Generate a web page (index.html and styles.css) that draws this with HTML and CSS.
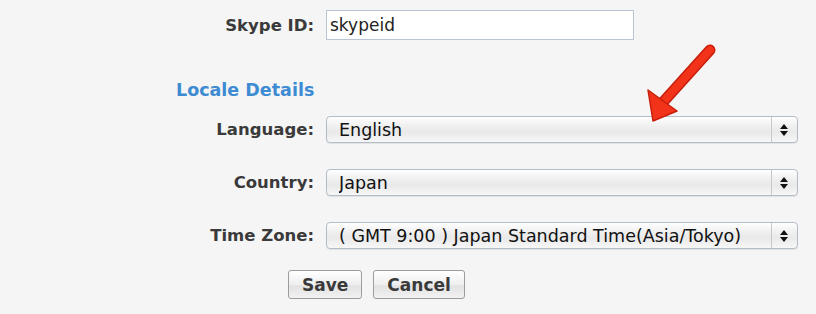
FILE: index.html
```html
<!DOCTYPE html>
<html lang="en">
<head>
    <meta charset="UTF-8">
    <meta name="viewport" content="width=device-width, initial-scale=1.0">
    <title>Profile Settings</title>
    <link rel="stylesheet" href="styles.css">
</head>
<body>

<form id="profileForm" class="profile">
    <div class="row first">
        <label for="skype">Skype ID:</label>
        <input type="text" id="skype" name="SkypeID" value="skypeid">
    </div>

    <h2 class="section">Locale Details</h2>

    <div class="row">
        <label for="language">Language:</label>
        <div class="select">
            <select id="language" name="Language">
                <option>English</option>
                <option>Japanese</option>
            </select>
            <span class="arrows"></span>
        </div>
    </div>

    <div class="row">
        <label for="country">Country:</label>
        <div class="select">
            <select id="country" name="Country">
                <option>Japan</option>
                <option>United States</option>
            </select>
            <span class="arrows"></span>
        </div>
    </div>

    <div class="row">
        <label for="timezone">Time Zone:</label>
        <div class="select">
            <select id="timezone" name="TimeZone">
                <option>( GMT 9:00 ) Japan Standard Time(Asia/Tokyo)</option>
            </select>
            <span class="arrows"></span>
        </div>
    </div>

    <div class="actions">
        <button type="button">Save</button>
        <button type="button">Cancel</button>
    </div>

    <!-- annotation arrow pointing at the language field -->
    <svg class="pointer" width="80" height="90" viewBox="0 0 80 90">
        <path d="M68 12 L22 63" stroke="#c81e0c" stroke-width="11" stroke-linecap="round" fill="none"/>
        <path d="M68 12 L22 63" stroke="#f2331a" stroke-width="8" stroke-linecap="round" fill="none"/>
        <polygon points="11,83 6,52 35,73" fill="#f2331a" stroke="#c81e0c" stroke-width="1.5" stroke-linejoin="round"/>
    </svg>
</form>

</body>
</html>
```

FILE: styles.css
```css
body { margin: 0; background: #f5f5f5; font-family: "DejaVu Sans", Verdana, sans-serif; color: #333; }
.profile { position: relative; width: 640px; padding: 10px 0 0 176px; }
.row { display: grid; grid-template-columns: 138px 472px; column-gap: 12px; align-items: center; margin-bottom: 26px; }
.row.first { grid-template-columns: 138px 308px; margin-bottom: 40px; }
label { text-align: right; font-weight: bold; font-size: 16.5px; color: #3a3a3a; }
input { height: 30px; box-sizing: border-box; border: 1px solid #b9c4d4; background: #fff; padding: 0 3px; font-family: "DejaVu Sans", Verdana, sans-serif; font-size: 17px; color: #222; }
.section { margin: 0 0 16px; font-size: 17.5px; color: #3d8bd2; height: 20px; line-height: 20px; }
.select { position: relative; height: 27px; }
select { appearance: none; -webkit-appearance: none; width: 100%; height: 27px; box-sizing: border-box; border: 1px solid #b4bcc8; border-radius: 4px; padding: 0 30px 0 12px; font-family: "DejaVu Sans", Verdana, sans-serif; font-size: 17.5px; color: #111; background: linear-gradient(#ffffff, #f0f0f0 35%, #e9e9e9 60%, #f7f7f7); box-shadow: 0 1px 1px rgba(0,0,0,0.08); }
.arrows { position: absolute; right: 1px; top: 1px; bottom: 1px; width: 25px; border-left: 1px solid #c8c8c8; pointer-events: none; }
.arrows::before, .arrows::after { content: ""; position: absolute; left: 8px; border-left: 4px solid transparent; border-right: 4px solid transparent; }
.arrows::before { top: 7px; border-bottom: 5px solid #111; }
.arrows::after { top: 14px; border-top: 5px solid #111; }
.actions { display: flex; gap: 11px; margin: -5px 0 0 112px; }
button { height: 29px; padding: 0 13px; border: 1px solid #9c9c9c; border-radius: 3px; background: linear-gradient(#ffffff, #efefef 50%, #e2e2e2 55%, #f2f2f2); font-family: "DejaVu Sans", Verdana, sans-serif; font-weight: bold; font-size: 17px; color: #3a3a3a; }
.pointer { position: absolute; left: 642px; top: 38px; }
```
